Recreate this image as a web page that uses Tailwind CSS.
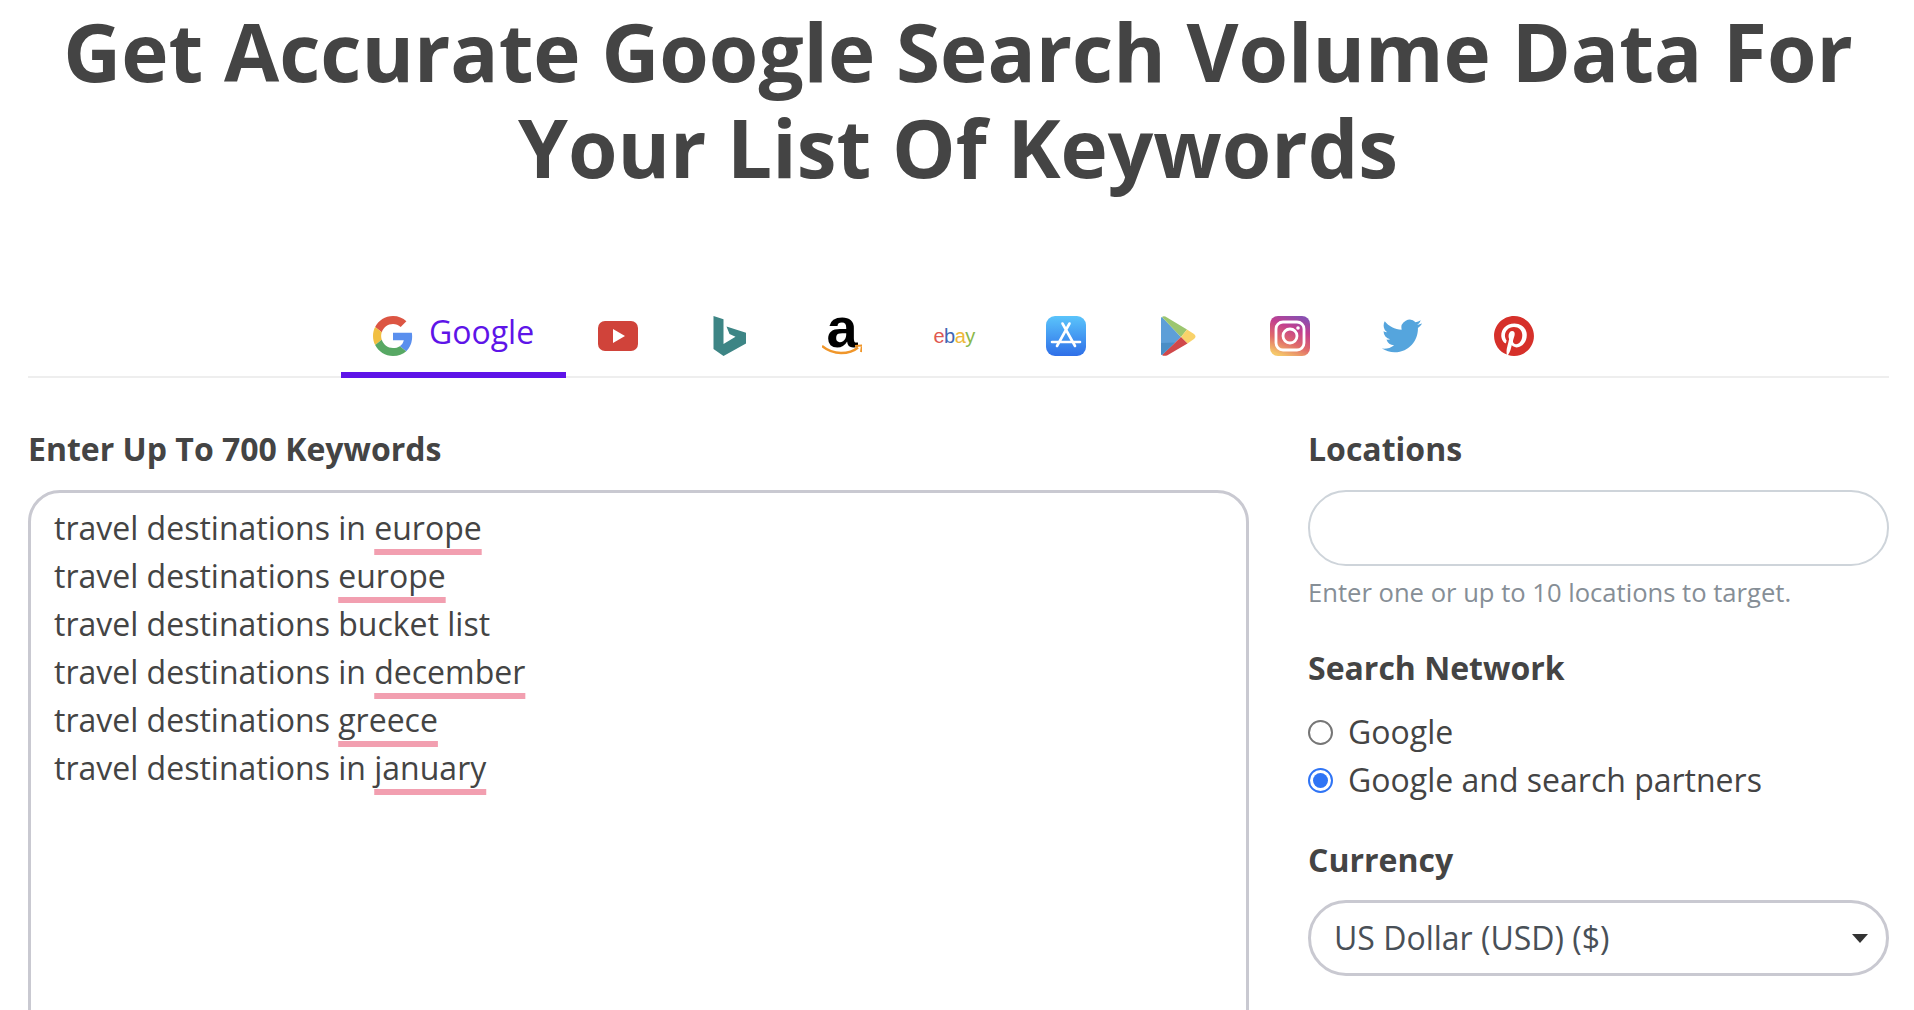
<!DOCTYPE html>
<html lang="en">
<head>
<meta charset="utf-8">
<title>Keyword Search Volume</title>
<script src="https://cdn.jsdelivr.net/npm/@tailwindcss/browser@4"></script>
</head>
<body class="bg-white font-['Open_Sans',sans-serif] text-[#444444]">
<div class="h-[1010px] overflow-hidden pt-[3px] pr-[25px] pl-[28px]">
  <h1 class="-ml-[1px] text-center text-[80px] leading-[96px] font-bold text-[#444444]">Get Accurate Google Search Volume Data For<br>Your List Of Keywords</h1>

  <nav class="mt-[99px] flex justify-center border-b-2 border-[#eeeeee]">
    <a class="-mb-[2px] flex h-[84px] items-start gap-[16px] border-b-[6px] border-[#5e14e8] px-8 pt-[22px] text-[32px] leading-[36px] text-[#5e14e8]">
      <svg class="h-10 w-10" viewBox="0 0 48 48"><path fill="#dc5543" d="M24 9.5c3.54 0 6.71 1.22 9.21 3.6l6.85-6.85C35.9 2.38 30.47 0 24 0 14.62 0 6.51 5.38 2.56 13.22l7.98 6.19C12.43 13.72 17.74 9.5 24 9.5z"/><path fill="#5a8fee" d="M46.98 24.55c0-1.57-.15-3.09-.38-4.55H24v9.02h12.94c-.58 2.96-2.26 5.48-4.78 7.18l7.73 6c4.51-4.18 7.09-10.36 7.09-17.65z"/><path fill="#f1bf42" d="M10.53 28.59c-.48-1.45-.76-2.99-.76-4.59s.27-3.14.76-4.59l-7.98-6.19C.92 16.46 0 20.12 0 24c0 3.88.92 7.54 2.56 10.78l7.97-6.19z"/><path fill="#57a864" d="M24 48c6.48 0 11.93-2.13 15.89-5.81l-7.73-6c-2.15 1.45-4.92 2.3-8.16 2.3-6.26 0-11.57-4.22-13.47-9.91l-7.98 6.19C6.51 42.62 14.62 48 24 48z"/></svg>
      <span class="-mt-[2px]">Google</span>
    </a>
    <a class="pl-8 pr-10 pt-[22px]">
      <svg class="h-10 w-10" viewBox="0 0 40 40"><rect x="0" y="5" width="40" height="30" rx="7" fill="#d0433a"/><path d="M15 13l12 7-12 7z" fill="#fff"/></svg>
    </a>
    <a class="pl-8 pr-10 pt-[22px]">
      <svg class="h-10 w-10" viewBox="0 0 40 40"><path fill="#3d8585" d="M3.5 0L13.5 3.300V28L25.500 20.700 19.500 18 16.500 10.500 36 16.700V27.500L13.500 40 3.500 33z"/></svg>
    </a>
    <a class="pl-8 pr-10 pt-[22px]">
      <div class="relative h-10 w-10">
        <span class="absolute inset-x-0 -top-[16px] text-center font-['Liberation_Sans',sans-serif] text-[56px] leading-[56px] font-bold text-black">a</span>
        <svg class="absolute inset-0 h-10 w-10" viewBox="0 0 40 40"><path d="M0 30c6 5 12 7 19 7 7 0 13-2 17-5.500" fill="none" stroke="#f0962a" stroke-width="2.400"/><path d="M33 30l7-.5-1 6.500" fill="none" stroke="#f0962a" stroke-width="2"/></svg>
      </div>
    </a>
    <a class="pl-8 pr-10 pt-[22px]">
      <div class="flex h-10 w-10 items-center justify-center font-['Liberation_Sans',sans-serif] text-[20px] leading-none tracking-[-0.5px]"><span class="text-[#e0584f]">e</span><span class="text-[#3f67b5]">b</span><span class="text-[#eeb83c]">a</span><span class="text-[#8ab84a]">y</span></div>
    </a>
    <a class="pl-8 pr-10 pt-[22px]">
      <svg class="h-10 w-10" viewBox="0 0 40 40"><defs><linearGradient id="as" x1="0" y1="0" x2="0" y2="1"><stop offset="0" stop-color="#5ac4fb"/><stop offset="1" stop-color="#2f6fe8"/></linearGradient></defs><rect width="40" height="40" rx="9" fill="url(#as)"/><path d="M23.500 7.500L11 30M16.500 7.500L29 30M6 26h28" fill="none" stroke="#fff" stroke-width="2.600" stroke-linecap="round"/></svg>
    </a>
    <a class="pl-8 pr-10 pt-[22px]">
      <svg class="h-10 w-10" viewBox="0 0 40 40"><path fill="#5d9fd8" d="M3 3C3 1.500 3.500 1 4 1L23 21 4 39C3.500 39 3 38.500 3 37z"/><path fill="#9cc66f" d="M4 1C5 0 7 0 9 1.500L29 13.500 23 21z"/><path fill="#f9d26a" d="M29 13.500L36 18C38 19.500 38 21.500 36 23L29.500 27.500 23 21z"/><path fill="#d0484a" d="M29.500 27.500L9 39.500C7 40 5 40 4 39L23 21z"/><path fill="#4a8ec6" d="M3 27L17 26.500 4 39C3.500 39 3 38.500 3 37z"/></svg>
    </a>
    <a class="pl-8 pr-10 pt-[22px]">
      <svg class="h-10 w-10" viewBox="0 0 40 40"><defs><linearGradient id="ig" x1="0.300" y1="1" x2="0.700" y2="0"><stop offset="0" stop-color="#f5c76a"/><stop offset="0.350" stop-color="#e0696a"/><stop offset="0.700" stop-color="#c23f8f"/><stop offset="1" stop-color="#8a4fb0"/></linearGradient></defs><rect width="40" height="40" rx="8" fill="url(#ig)"/><rect x="6" y="6" width="28" height="28" rx="7" fill="none" stroke="#fff" stroke-width="2.800"/><circle cx="20" cy="20" r="7" fill="none" stroke="#fff" stroke-width="2.800"/><circle cx="28" cy="12" r="1.800" fill="#fff"/></svg>
    </a>
    <a class="pl-8 pr-10 pt-[22px]">
      <svg class="h-10 w-10" viewBox="0 0 24 24"><path fill="#55a5dd" d="M23.953 4.570a10 10 0 01-2.825.775 4.958 4.958 0 002.163-2.723c-.951.555-2.005.959-3.127 1.184a4.920 4.920 0 00-8.384 4.482C7.690 8.095 4.067 6.130 1.640 3.162a4.822 4.822 0 00-.666 2.475c0 1.710.870 3.213 2.188 4.096a4.904 4.904 0 01-2.228-.616v.060a4.923 4.923 0 003.946 4.827 4.996 4.996 0 01-2.212.085 4.936 4.936 0 004.604 3.417 9.867 9.867 0 01-6.102 2.105c-.390 0-.779-.023-1.170-.067a13.995 13.995 0 007.557 2.209c9.053 0 13.998-7.496 13.998-13.985 0-.210 0-.420-.015-.630A9.935 9.935 0 0024 4.590z"/></svg>
    </a>
    <a class="pl-8 pr-[42px] pt-[22px]">
      <svg class="h-10 w-10" viewBox="0 0 24 24"><path fill="#d6302a" d="M12.017 0C5.396 0 .029 5.367.029 11.987c0 5.079 3.158 9.417 7.618 11.162-.105-.949-.199-2.403.041-3.439.219-.937 1.406-5.957 1.406-5.957s-.359-.720-.359-1.781c0-1.663.967-2.911 2.168-2.911 1.024 0 1.518.769 1.518 1.688 0 1.029-.653 2.567-.992 3.992-.285 1.193.600 2.165 1.775 2.165 2.128 0 3.768-2.245 3.768-5.487 0-2.861-2.063-4.869-5.008-4.869-3.410 0-5.409 2.562-5.409 5.199 0 1.033.394 2.143.889 2.741.099.120.112.225.085.345-.090.375-.293 1.199-.334 1.363-.053.225-.172.271-.401.165-1.495-.690-2.433-2.878-2.433-4.646 0-3.776 2.748-7.252 7.920-7.252 4.158 0 7.392 2.967 7.392 6.923 0 4.135-2.607 7.462-6.233 7.462-1.214 0-2.354-.629-2.758-1.379l-.749 2.848c-.269 1.045-1.004 2.352-1.498 3.146 1.123.345 2.306.535 3.550.535 6.607 0 11.985-5.365 11.985-11.987C23.970 5.390 18.592.026 11.985.026L12.017 0z"/></svg>
    </a>
  </nav>

  <main class="mt-[47px] flex gap-[59px]">
    <section class="w-[1221px] shrink-0">
      <h2 class="text-[32px] leading-[48px] font-bold">Enter Up To 700 Keywords</h2>
      <div class="mt-[17px] h-[640px] rounded-[32px] border-[3px] border-[#c9c9d1] px-[23px] pt-[11px] text-[32px] leading-[48px] text-[#444444] [&>p>span]:underline [&>p>span]:decoration-[#f29fb0] [&>p>span]:decoration-[6px] [&>p>span]:underline-offset-[9px] [&>p>span]:[text-decoration-skip-ink:none]">
        <p>travel destinations in <span>europe</span></p>
        <p>travel destinations <span>europe</span></p>
        <p>travel destinations bucket list</p>
        <p>travel destinations in <span>december</span></p>
        <p>travel destinations <span>greece</span></p>
        <p>travel destinations in <span>january</span></p>
      </div>
    </section>

    <aside class="min-w-0 flex-1">
      <h2 class="text-[32px] leading-[48px] font-bold">Locations</h2>
      <div class="mt-[17px] h-[76px] rounded-full border-2 border-[#ced4da]"></div>
      <p class="mt-[8px] text-[25.6px] leading-[38.4px] text-[#868e96]">Enter one or up to 10 locations to target.</p>
      <h2 class="mt-[32px] text-[32px] leading-[48px] font-bold">Search Network</h2>
      <div class="mt-[16px] text-[32px] leading-[48px]">
        <label class="flex items-center gap-[15px]"><span class="h-[25px] w-[25px] rounded-full border-2 border-[#767676]"></span>Google</label>
        <label class="flex items-center gap-[15px]"><span class="flex h-[25px] w-[25px] items-center justify-center rounded-full border-2 border-[#2f74f5]"><span class="h-[15px] w-[15px] rounded-full bg-[#2f74f5]"></span></span>Google and search partners</label>
      </div>
      <h2 class="mt-[32px] text-[32px] leading-[48px] font-bold">Currency</h2>
      <div class="mt-[16px] flex h-[76px] items-center justify-between rounded-full border-[3px] border-[#c9c9d1] pr-[18px] pl-[23px] text-[32px] text-[#495057]">
        <span>US Dollar (USD) ($)</span>
        <span class="h-0 w-0 border-x-[8px] border-t-[9px] border-x-transparent border-t-[#333333]"></span>
      </div>
    </aside>
  </main>
</div>
</body>
</html>
